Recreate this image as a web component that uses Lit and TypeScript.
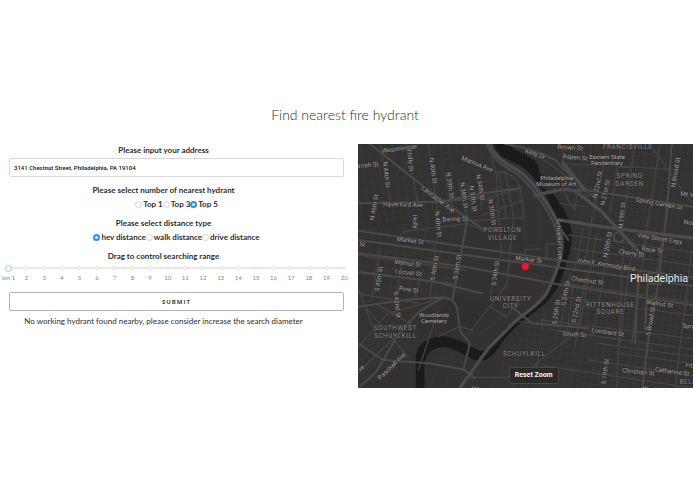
import { LitElement, html, css, svg } from "lit";
import { customElement, state } from "lit/decorators.js";

type Label = [text: string, x: number, y: number, angle?: number];

const streetLabels: Label[] = [
  ["Westminster", 134, 28, -8],
  ["arrish St", 36, 78, -5],
  ["Holly St", 164, 62, 85],
  ["N 44th St", 92, 104, 84],
  ["N 40th St", 232, 92, 82],
  ["N 39th St", 283, 136, 82],
  ["N 38th St", 325, 166, 82],
  ["N 37th St", 352, 176, 82],
  ["N 34th St", 374, 142, 80],
  ["N 35th St", 409, 217, 82],
  ["N 46th St", 60, 202, -80],
  ["Holly", 178, 245, 86],
  ["N 40th St", 247, 253, 84],
  ["Mantua Ave", 366, 74, 22],
  ["Lancaster Ave", 248, 180, 37],
  ["Haverford Ave", 144, 196, 1],
  ["Baring St", 300, 239, -2],
  ["Kelly Dr", 540, 44, 18],
  ["Brown St", 645, 25, 3],
  ["Aspen St", 660, 54, 6],
  ["N 22nd St", 730, 134, -78],
  ["N 21st St", 753, 158, -78],
  ["N Broad St", 964, 97, -80],
  ["Mt Vernon", 1020, 168, 6],
  ["Spring Garden St", 912, 193, 10],
  ["N 19th St", 803, 226, -84],
  ["Noble St", 1022, 252, 6],
  ["N 20th St", 760, 314, -80],
  ["Vine Street Expy", 914, 298, 9],
  ["Race St", 892, 332, 6],
  ["Cherry St", 829, 342, 8],
  ["John F. Kennedy Blvd", 752, 376, 9],
  ["Chestnut St", 697, 424, 8],
  ["Walnut St", 914, 494, 8],
  ["Schuylkill Expy", 611, 298, 86],
  ["Market St", 166, 304, 7],
  ["St", 22, 315, 5],
  ["Walnut St", 158, 372, 7],
  ["Locust St", 160, 400, 6],
  ["Pine St", 161, 451, 7],
  ["S 45th St", 74, 417, -81],
  ["S 40th St", 241, 385, -80],
  ["S 38th St", 309, 381, -81],
  ["S 34th St", 424, 400, -82],
  ["S 42nd St", 124, 494, 84],
  ["Market St", 521, 361, 7],
  ["S 24th St", 634, 460, -80],
  ["S 25th St", 606, 516, -82],
  ["S 22nd St", 666, 509, -78],
  ["S Broad St", 889, 544, -80],
  ["Lombard St", 758, 579, 8],
  ["South St", 658, 585, 5],
  ["Spruce St", 1022, 563, 6],
  ["S 19th St", 753, 695, -82],
  ["Christian St", 850, 698, 6],
  ["Catharine St", 951, 697, 8],
  ["Fitzwater", 1030, 681, 6],
  ["Paschall Ave", 112, 680, -44],
  ["ve", 20, 686, -38],
  ["Wharton", 386, 752, 6],
  ["Washington", 912, 753, 6],
];

const placeLabels: Label[] = [
  ["Philadelphia", 605, 120],
  ["Museum of Art", 604, 137],
  ["Eastern State", 756, 58],
  ["Penitentiary", 756, 76],
  ["Woodlands", 237, 532],
  ["Cemetery", 237, 549],
];

const districtLabels: Label[] = [
  ["FRANCISVILLE", 818, 26],
  ["SPRING", 824, 115],
  ["GARDEN", 824, 137],
  ["POWELTON", 442, 277],
  ["VILLAGE", 442, 299],
  ["UNIVERSITY", 467, 482],
  ["CITY", 467, 503],
  ["SOUTHWEST", 121, 571],
  ["SCHUYLKILL", 121, 593],
  ["SCHUYLKILL", 508, 649],
  ["RITTENHOUSE", 766, 500],
  ["SQUARE", 766, 522],
  ["BELLA", 1006, 733],
];

const range = (n: number) => Array.from({ length: n }, (_, i) => i);

@customElement("hydrant-map")
export class HydrantMap extends LitElement {
  static styles = css`
    :host {
      display: block;
      position: relative;
      background: #333231;
    }
    svg {
      display: block;
      width: 100%;
      aspect-ratio: 335 / 244;
    }
    .water {
      fill: #1a1b1b;
    }
    .lane,
    .street,
    .road,
    .highway {
      fill: none;
      stroke-linejoin: round;
      stroke-linecap: round;
    }
    .lane {
      stroke: #3b3b3b;
      stroke-width: 2;
    }
    .street {
      stroke: #434343;
      stroke-width: 4;
    }
    .road {
      stroke: #4a4a4a;
      stroke-width: 6;
    }
    .highway {
      stroke: #4b4c4c;
      stroke-width: 10;
    }
    .park {
      fill: #31302f;
    }
    text {
      font-family: Roboto, "Open Sans", sans-serif;
      text-anchor: middle;
      paint-order: stroke;
      stroke: #2c2c2b;
      stroke-width: 3px;
    }
    .street-name {
      font-size: 19px;
      fill: #a0a09e;
    }
    .place-name {
      font-size: 18px;
      fill: #aaaaa8;
    }
    .district-name {
      font-size: 19px;
      letter-spacing: 2px;
      fill: #8a8a88;
    }
    .city-name {
      font-size: 32px;
      fill: #eeeeee;
    }
    .marker {
      fill: #f5141e;
    }
    .reset {
      position: absolute;
      left: 45%;
      bottom: 4px;
      box-sizing: border-box;
      height: 17px;
      padding: 0 5px;
      border: 1px solid #484848;
      border-radius: 2px;
      background: #2a2a29;
      color: #f4f4f4;
      font: 700 7px/15px Roboto, "Open Sans", sans-serif;
      white-space: nowrap;
    }
  `;

  private label(cls: string, [text, x, y, angle = 0]: Label) {
    return svg`<text class=${cls} x=${x} y=${y} dy=${angle ? 4 : 0}
      transform=${`rotate(${angle} ${x} ${y})`}>${text}</text>`;
  }

  render() {
    return html`
      <svg viewBox="9 12 1005 732" preserveAspectRatio="xMidYMid slice" role="img" aria-label="Map of Philadelphia">
        <defs>
          <clipPath id="east"><path d="M640 240L700 190L640 70L600 12H1014V744H400L470 620L600 480L645 400Z" /></clipPath>
          <clipPath id="west"><path d="M9 12H400L430 95L500 120V230L400 250L9 270Z" /></clipPath>
          <clipPath id="middle"><path d="M9 270L330 250L300 460L150 480L9 500Z" /></clipPath>
          <clipPath id="southwest"><path d="M9 500L190 480L190 520L100 640L9 744Z" /></clipPath>
        </defs>
        <path class="park" d="M9 190H150V262L9 268ZM300 475L420 490L350 570L240 600L180 560Z" />
        <g clip-path="url(#east)">
          ${range(44).map((i) => svg`<path class="lane" d=${`M380 ${i * 21 - 110}l680 94`} />`)}
          ${range(34).map((i) => svg`<path class="lane" d=${`M${500 + i * 21} 0l-110 750`} />`)}
        </g>
        <g clip-path="url(#west)">
          ${range(18).map((i) => svg`<path class="lane" d=${`M9 ${i * 20 - 10}l500 -58`} />`)}
          ${range(22).map((i) => svg`<path class="lane" d=${`M${i * 24 - 10} 0l38 280`} />`)}
        </g>
        <g clip-path="url(#middle)">
          ${range(12).map((i) => svg`<path class="lane" d=${`M9 ${i * 26 + 220}l330 46`} />`)}
          ${range(14).map((i) => svg`<path class="lane" d=${`M${i * 27 + 30} 230l-42 290`} />`)}
        </g>
        <g clip-path="url(#southwest)">
          ${range(14).map((i) => svg`<path class="lane" d=${`M0 ${i * 22 + 500}l220 -200`} />`)}
          ${range(14).map((i) => svg`<path class="lane" d=${`M0 ${i * 24 + 370}l220 250`} />`)}
        </g>
        <path class="lane" d="M505 240C520 180 500 270 515 305S560 310 555 240S525 190 515 130M350 590C420 570 440 500 560 470M9 590C90 610 130 650 200 610S270 570 350 575M400 12L520 100M560 470L600 420M240 660L300 640L270 740M225 740L260 650L300 660M440 660L520 720M490 640L560 700" />
        <path class="water" d="M416 12L460 12C480 38 500 32 520 50C545 60 555 80 551 96L565 108L553 126L562 142L600 168C620 198 640 225 649 268C655 310 642 345 631 380C620 420 605 455 576 486C535 522 492 550 466 578C438 603 425 644 392 660C365 668 341 651 323 641C295 627 264 612 234 630C214 640 207 665 208 690L209 744H182V668C180 632 195 608 222 597C258 581 291 591 323 606C350 618 367 635 386 632C410 610 437 580 464 556C500 523 543 500 566 468C590 438 604 385 618 345C627 295 622 262 608 235L573 169L541 121C520 88 486 72 448 54C430 44 422 28 416 12Z" />
        <path class="street" d="M75 12L104 184M152 12L190 190M220 12L256 280M270 100L295 215M310 120L338 240M337 130L352 215M366 95L382 205M406 30L425 110L432 240M430 95L455 235M450 95L476 232M425 96C455 92 480 108 495 140L508 230M385 180L495 145M385 225L505 180M330 243L508 232M140 275L330 252M160 270Q120 292 145 296M9 345L330 390M9 398L300 432M9 462L190 490M75 330L50 480M140 370L118 490M205 390L180 470M245 290L225 470" />
        <path class="street" d="M432 240L440 340L420 390L405 480M475 235L455 435L400 505L350 569L312 560L250 590M510 350V328H560M575 360V312H615M405 500L455 530L490 480M470 500L530 550L615 560M490 545L600 557M330 248L380 270M9 445L60 580M30 500L160 650M60 490L180 560M9 620L100 520L260 475M9 700L120 590L190 515M190 690L250 510" />
        <path class="street" d="M620 70L960 88M885 12L985 155L1014 190M615 190L700 200M625 20L622 100M712 225L690 360M760 12L715 220M800 12L765 220M840 12L800 280M880 230L830 610M835 300L790 640M805 320L785 744M760 320L715 585M725 280L675 555M685 265L660 390M645 400L615 570M655 430L635 590M690 420L660 620M940 200L900 430M640 285L1014 338M650 325L1014 376M625 430L1014 488M610 470L1014 527M560 540L1014 596M560 540V565M590 570L1014 628M790 640L1014 670M730 610L1014 650M700 660L1014 706M1014 744L570 678M650 585L510 700M330 712H470M550 650L545 695M915 12L870 300M1010 330L960 744" />
        <path class="road" d="M9 190L250 185L385 160L495 144M45 12L200 135L300 208L390 272M250 186L385 172M9 272L330 320L620 362L1014 412M9 300L440 360L650 388L1014 438M9 340L330 380L620 435L1014 496M9 395L240 425L380 460M336 240L317 350L292 480M9 500L150 480L265 472L292 480C315 500 305 540 318 578L345 610L325 690M265 472L192 515L125 590L85 660L60 700L9 744M9 610L85 660L220 670L325 688L360 715M470 500L530 550L700 565M950 12L935 220L910 430L880 600L862 744M690 150L1014 200M880 400L870 570M850 400L840 610M880 400L920 400L915 435L880 430ZM605 250L640 300M610 360L690 372" />
        <path class="highway" d="M404 12C420 55 455 72 490 92C530 120 550 155 575 190C600 230 612 250 620 290C627 340 605 400 575 460C540 510 500 520 465 560L400 625L315 744" />
        <path class="road" d="M395 12C412 60 445 78 480 98C518 126 540 158 565 195C590 235 602 255 609 292" />
        <path class="highway" d="M613 240L740 260L850 274L1014 294M540 165L625 148L660 152L740 215L860 345M625 70L690 150L660 152" />
        <path class="street" d="M535 45L570 62L622 100L680 150L720 170L720 195M625 150L645 190L660 210L665 165L640 140ZM665 150L690 170L720 160" />
        <circle class="road" cx="792" cy="291" r="15" />
        <path class="road" d="M450 12C500 20 540 30 600 60L650 110" />
        ${streetLabels.map((l) => this.label("street-name", l))}
        ${placeLabels.map((l) => this.label("place-name", l))}
        ${districtLabels.map((l) => this.label("district-name", l))}
        ${this.label("city-name", ["Philadelphia", 912, 427])}
        <circle class="marker" cx="511" cy="379" r="11" />
      </svg>
      <button class="reset" type="button">Reset Zoom</button>
    `;
  }
}

@customElement("app-root")
export class AppRoot extends LitElement {
  static styles = css`
    :host {
      display: block;
      padding: 103px 2px 0 9px;
      background: #ffffff;
      color: #2e2e2e;
      font: 8px/12px Lato, "Open Sans", sans-serif;
    }
    h1 {
      margin: 0 0 17px;
      padding-right: 12px;
      font-size: 14px;
      line-height: 24px;
      font-weight: 300;
      text-align: center;
    }
    .columns {
      display: grid;
      grid-template-columns: minmax(0, 1fr) minmax(0, 1fr);
      gap: 14px;
      align-items: start;
    }
    form {
      display: flex;
      flex-direction: column;
    }
    fieldset {
      margin: 0 0 7px;
      padding: 0;
      border: 0;
      min-width: 0;
    }
    .caption {
      display: block;
      box-sizing: border-box;
      width: 100%;
      margin: 0 0 2px;
      padding: 0 26px 0 0;
      font-weight: 700;
      text-align: center;
    }
    .address {
      box-sizing: border-box;
      height: 19px;
      margin: 0 0 7px;
      padding: 0 4px;
      border: 1px solid #dadada;
      border-radius: 2px;
      background: #ffffff;
      color: #111111;
      font: 500 6px/12px Roboto, sans-serif;
    }
    .choices {
      display: flex;
      justify-content: center;
      font-weight: 700;
    }
    .choice {
      display: flex;
      align-items: center;
      gap: 1px;
    }
    .choice input {
      appearance: none;
      box-sizing: border-box;
      width: 7px;
      height: 7px;
      margin: 0;
      border: 1px solid #d4d4d4;
      border-radius: 50%;
      background: #ffffff;
    }
    .choice input:checked {
      border: 2px solid #3191f2;
      background: #d4e9ff;
    }
    .slider {
      display: grid;
      margin: 0 -9px 8px;
      grid-template-rows: 8px 12px;
    }
    .line,
    .dots,
    .handle {
      grid-area: 1 / 1;
      align-self: center;
    }
    .line {
      height: 2px;
      margin: 0 9px;
      background: #e8e8e8;
    }
    .dots,
    .marks {
      display: grid;
      grid-template-columns: repeat(20, minmax(0, 1fr));
      justify-items: center;
    }
    .dot {
      box-sizing: border-box;
      width: 4px;
      height: 4px;
      border: 1px solid #e4e4e4;
      border-radius: 50%;
      background: #ffffff;
    }
    .handle {
      appearance: none;
      z-index: 1;
      height: 8px;
      margin: 0 5px;
      background: transparent;
    }
    .handle::-webkit-slider-thumb {
      appearance: none;
      box-sizing: border-box;
      width: 7px;
      height: 7px;
      border: 1px solid #7ccdf2;
      border-radius: 50%;
      background: #ffffff;
    }
    .marks {
      grid-area: 2 / 1;
      color: #858585;
      font-size: 6px;
      line-height: 12px;
      white-space: nowrap;
    }
    .submit {
      box-sizing: border-box;
      height: 19px;
      margin: 0 0 4px;
      padding: 0;
      border: 1px solid #b4b4b4;
      border-radius: 2px;
      background: #ffffff;
      color: #444444;
      font: 700 6px/16px "Open Sans", sans-serif;
      letter-spacing: 1px;
      text-transform: uppercase;
    }
    .message {
      margin: 0;
      padding-right: 26px;
      text-align: center;
    }
  `;

  @state() private count = "Top 5";
  @state() private distance = "hev distance";
  @state() private km = 1;

  private choices(name: string, options: string[], current: string, pick: (v: string) => void) {
    return html`<div class="choices">
      ${options.map(
        (o) => html`<label class="choice"
          ><input type="radio" name=${name} .checked=${o === current} @change=${() => pick(o)} />${o}</label
        >`
      )}
    </div>`;
  }

  render() {
    return html`
      <h1>Find nearest fire hydrant</h1>
      <div class="columns">
        <form @submit=${(e: Event) => e.preventDefault()}>
          <label class="caption" for="address">Please input your address</label>
          <input class="address" id="address" type="text" value="3141 Chestnut Street, Philadelphia, PA 19104" />
          <fieldset>
            <legend class="caption">Please select number of nearest hydrant</legend>
            ${this.choices("count", ["Top 1", "Top 3", "Top 5"], this.count, (v) => (this.count = v))}
          </fieldset>
          <fieldset>
            <legend class="caption">Please select distance type</legend>
            ${this.choices(
              "distance",
              ["hev distance", "walk distance", "drive distance"],
              this.distance,
              (v) => (this.distance = v)
            )}
          </fieldset>
          <label class="caption" for="range">Drag to control searching range</label>
          <div class="slider">
            <div class="line"></div>
            <div class="dots">${range(20).map(() => html`<span class="dot"></span>`)}</div>
            <input
              class="handle"
              id="range"
              type="range"
              min="1"
              max="20"
              .value=${String(this.km)}
              @input=${(e: Event) => (this.km = Number((e.target as HTMLInputElement).value))}
            />
            <div class="marks">${range(20).map((i) => html`<span>${i ? i + 1 : "km 1"}</span>`)}</div>
          </div>
          <button class="submit" type="submit">Submit</button>
          <p class="message">No working hydrant found nearby, please consider increase the search diameter</p>
        </form>
        <hydrant-map></hydrant-map>
      </div>
    `;
  }
}
